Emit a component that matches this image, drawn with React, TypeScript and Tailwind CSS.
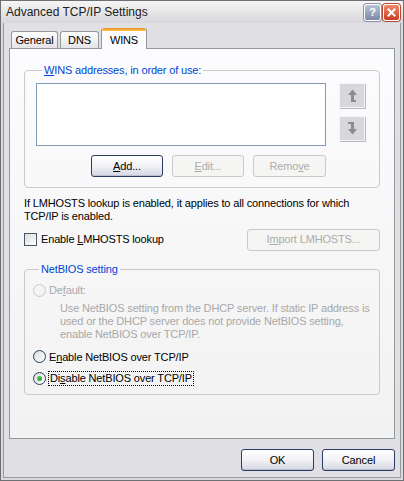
import type { ReactNode } from "react";

const font = { fontFamily: '"Liberation Sans", Arial, sans-serif' };

function U({ children }: { children: ReactNode }) {
  return <span className="underline underline-offset-[1px]">{children}</span>;
}

function Button({
  children,
  width,
  disabled,
}: {
  children: ReactNode;
  width: string;
  disabled?: boolean;
}) {
  return (
    <button
      type="button"
      className={
        disabled
          ? `${width} h-[22px] rounded-[3px] border border-[#c9c9c9] bg-[#f5f5f3] text-[11px] leading-none text-[#acacac]`
          : `${width} h-[22px] rounded-[3px] border border-[#2b3a63] bg-gradient-to-b from-white via-[#f2f2f6] to-[#d4d6e2] text-[11px] leading-none text-black shadow-[inset_0_-1px_0_#bcc0d4]`
      }
    >
      {children}
    </button>
  );
}

function ArrowButton({ down }: { down?: boolean }) {
  return (
    <div className="w-[26px] h-[25px] flex items-center justify-center border border-[#f4f4f4] bg-[#d8d8dc] shadow-[1px_1px_0_#b9b9bd]">
      <svg width="10" height="13" viewBox="0 0 10 13" fill="#8c8c8c">
        {down ? (
          <>
            <rect x="1" y="0" width="4" height="2" />
            <rect x="4" y="0" width="3" height="8" />
            <polygon points="1,7 10,7 5.5,12.5" />
          </>
        ) : (
          <>
            <polygon points="1,6 10,6 5.5,0.5" />
            <rect x="4" y="5" width="3" height="8" />
            <rect x="4" y="11" width="5" height="2" />
          </>
        )}
      </svg>
    </div>
  );
}

function Radio({ checked, disabled }: { checked?: boolean; disabled?: boolean }) {
  return (
    <span
      className={
        disabled
          ? "w-[13px] h-[13px] shrink-0 rounded-full border border-[#cacac8] bg-[#f4f4f2] flex items-center justify-center"
          : "w-[13px] h-[13px] shrink-0 rounded-full border border-[#2a3f5c] bg-gradient-to-br from-[#dcdcdc] to-white flex items-center justify-center"
      }
    >
      {checked && (
        <span className="w-[5px] h-[5px] rounded-full bg-gradient-to-br from-[#55d35a] to-[#1c9a21]" />
      )}
    </span>
  );
}

function Tab({ label, width, active }: { label: string; width: string; active?: boolean }) {
  if (active) {
    return (
      <div className={`relative z-10 -mb-px flex h-[21px] ${width} flex-col rounded-t-[3px] border-x border-[#919b9c] bg-[#fcfcfe]`}>
        <div className="h-[3px] rounded-t-[3px] bg-gradient-to-b from-[#e68b2c] to-[#ffc73c]" />
        <div className="flex flex-1 items-center justify-center pt-[1px] text-[11px] text-black">{label}</div>
      </div>
    );
  }
  return (
    <div className={`flex h-[17px] ${width} items-center justify-center rounded-t-[3px] border border-b-0 border-[#919b9c] bg-gradient-to-b from-white to-[#e4e4e6] text-[11px] text-black`}>
      {label}
    </div>
  );
}

function Group({ title, className, children }: { title: ReactNode; className: string; children: ReactNode }) {
  return (
    <fieldset className={`rounded-[4px] border border-[#cacaca] ${className}`}>
      <legend className="ml-[6px] px-[2px] text-[11px] leading-[13px] text-[#0046d5]">{title}</legend>
      {children}
    </fieldset>
  );
}

export default function App() {
  return (
    <div
      className="w-[404px] h-[481px] flex flex-col border border-[#6e6f73] bg-[#dadade] text-[11px] tracking-[-0.15px] text-black"
      style={font}
    >
      {/* title bar */}
      <div className="h-[22px] shrink-0 flex items-center bg-gradient-to-b from-[#f6f6f6] via-[#e6e6e8] to-[#d8d8dc] pl-[5px] pr-[3px]">
        <span className="flex-1 text-[12px] tracking-normal text-[#202020]">Advanced TCP/IP Settings</span>
        <div className="flex gap-[2px]">
          <div className="w-[17px] h-[17px] rounded-[3px] border border-white bg-gradient-to-b from-[#b8c2d8] to-[#7e89a8] flex items-center justify-center text-[11px] font-bold text-white shadow-[0_0_0_1px_#8892ab]">
            ?
          </div>
          <div className="w-[17px] h-[17px] rounded-[3px] border border-white bg-gradient-to-b from-[#f08a6a] to-[#c93a1c] flex items-center justify-center shadow-[0_0_0_1px_#b04a35]">
            <svg width="9" height="9" viewBox="0 0 9 9" stroke="white" strokeWidth="2" strokeLinecap="square">
              <path d="M1.5 1.5 L7.5 7.5 M7.5 1.5 L1.5 7.5" />
            </svg>
          </div>
        </div>
      </div>

      {/* client area */}
      <div className="flex-1 flex flex-col mx-[2px] mb-[2px] border-x border-b border-[#9a9b9f] bg-[#e0dfe3] px-[5px]">
        {/* tabs */}
        <div className="flex items-end pl-[2px] pt-[5px] gap-[2px]">
          <Tab label="General" width="w-[47px]" />
          <Tab label="DNS" width="w-[39px]" />
          <Tab label="WINS" width="w-[46px]" active />
        </div>

        {/* panel */}
        <div className="h-[391px] border border-[#919b9c] bg-gradient-to-b from-[#fcfcfe] to-[#f2f2f2] pl-[14px] pt-[15px]">
          <Group title={<><U>W</U>INS addresses, in order of use:</>} className="w-[356px] pl-[11px] pt-[6px] pb-[10px]">
            <div className="flex gap-[13px]">
              <div className="w-[290px] h-[63px] border border-[#7f9db9] bg-white" />
              <div className="flex flex-col gap-[8px]">
                <ArrowButton />
                <ArrowButton down />
              </div>
            </div>
            <div className="w-[290px] flex justify-end gap-[9px] mt-[9px]">
              <Button width="w-[72px]"><U>A</U>dd...</Button>
              <Button width="w-[72px]" disabled><U>E</U>dit...</Button>
              <Button width="w-[73px]" disabled>Remo<U>v</U>e</Button>
            </div>
          </Group>

          <p className="mt-[9px] leading-[13px] w-[356px]">
            If LMHOSTS lookup is enabled, it applies to all connections for which TCP/IP is enabled.
          </p>

          <div className="w-[356px] flex items-center mt-[6px] h-[21px]">
            <span className="w-[13px] h-[13px] border border-[#4a5568] bg-gradient-to-br from-[#dcdcdc] to-white" />
            <span className="ml-[4px] flex-1">
              Enable <U>L</U>MHOSTS lookup
            </span>
            <Button width="w-[133px]" disabled>I<U>m</U>port LMHOSTS...</Button>
          </div>

          <Group title="NetBIOS setting" className="w-[356px] mt-[13px] pl-[8px] pt-[6px] pb-[8px]">
            <div className="flex items-center gap-[3px] text-[#a8a8a8]">
              <Radio disabled />
              <span>
                De<U>f</U>ault:
              </span>
            </div>
            <p className="ml-[27px] mt-[3px] leading-[13px] whitespace-nowrap text-[#a8a8a8]">
              Use NetBIOS setting from the DHCP server. If static IP address is
              <br />
              used or the DHCP server does not provide NetBIOS setting,
              <br />
              enable NetBIOS over TCP/IP.
            </p>
            <div className="flex items-center gap-[3px] mt-[8px]">
              <Radio />
              <span>
                E<U>n</U>able NetBIOS over TCP/IP
              </span>
            </div>
            <div className="flex items-center gap-[2px] mt-[6px]">
              <Radio checked />
              <span className="border border-dotted border-black px-px leading-[13px]">
                Di<U>s</U>able NetBIOS over TCP/IP
              </span>
            </div>
          </Group>
        </div>

        {/* footer */}
        <div className="flex justify-end gap-[8px] pt-[10px]">
          <Button width="w-[73px]">OK</Button>
          <Button width="w-[73px]">Cancel</Button>
        </div>
      </div>
    </div>
  );
}
